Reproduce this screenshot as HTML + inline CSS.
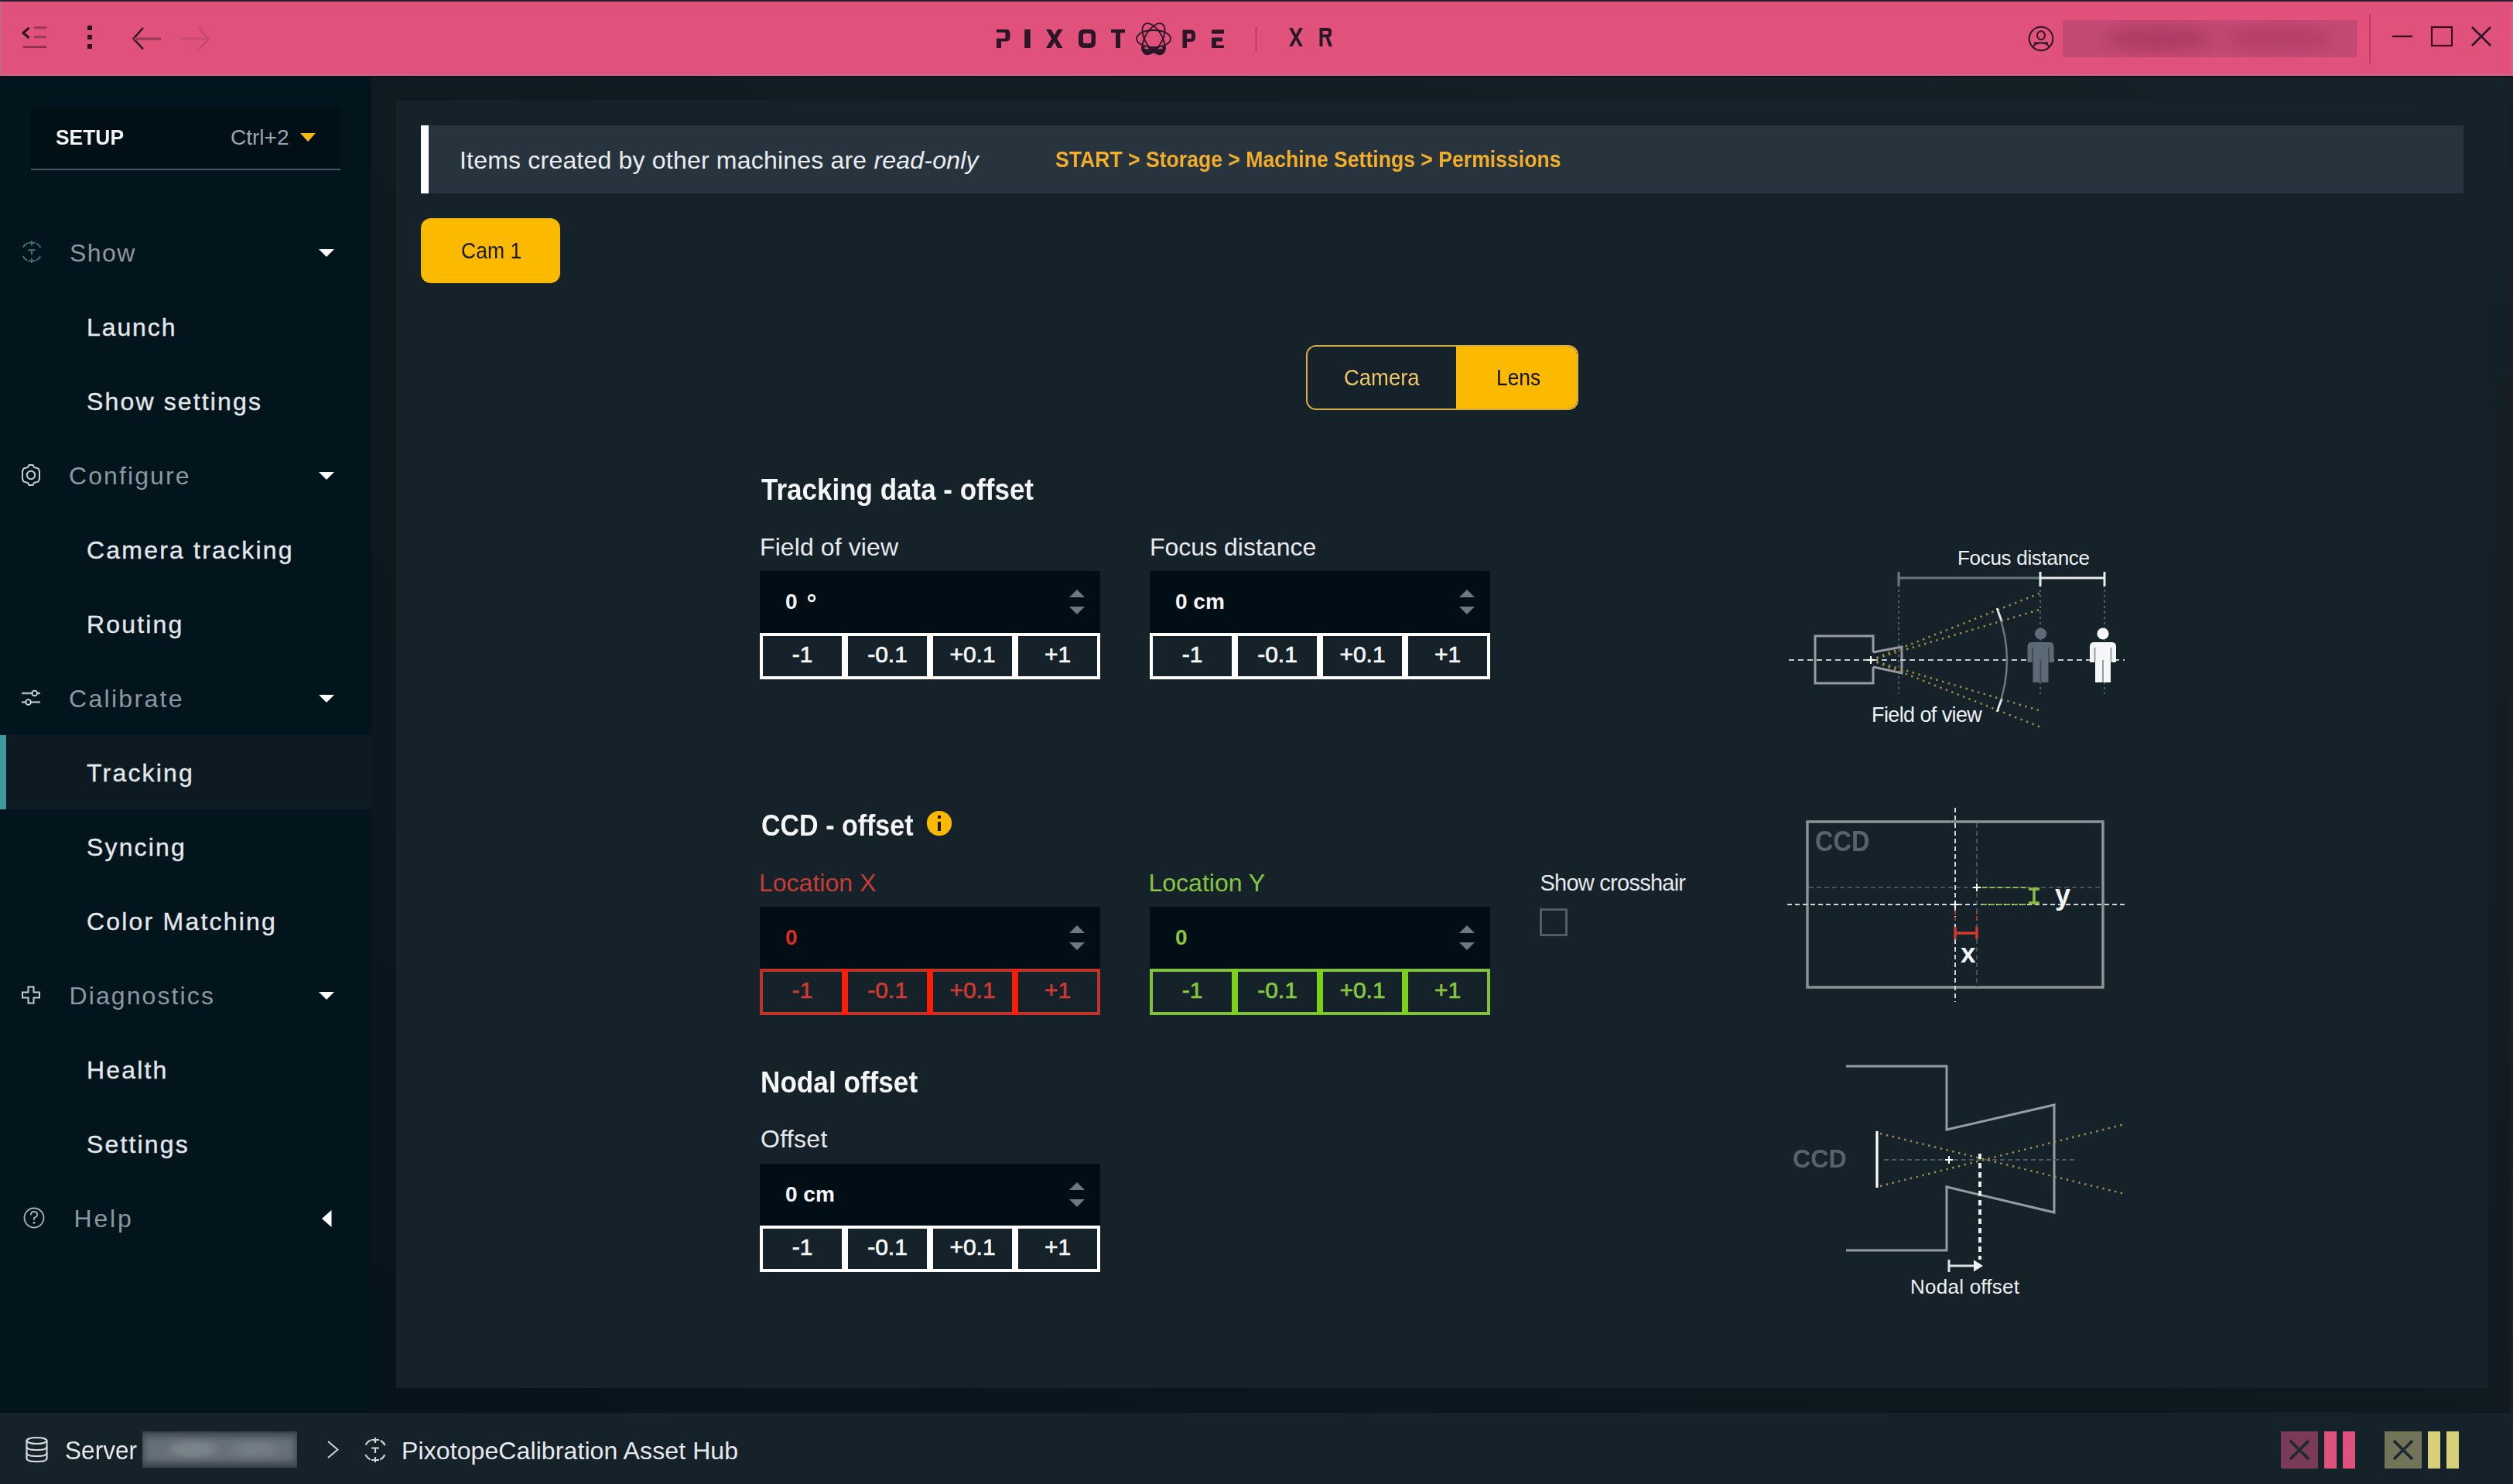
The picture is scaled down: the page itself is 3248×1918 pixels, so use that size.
<!DOCTYPE html>
<html><head><meta charset="utf-8">
<style>
html,body{margin:0;padding:0;}
body{width:3248px;height:1918px;overflow:hidden;position:relative;background:linear-gradient(to top right,#06121b 0%,#0f1920 50%,#162229 100%);font-family:"Liberation Sans",sans-serif;}
.a{position:absolute;}
.t{position:absolute;white-space:nowrap;font-family:"Liberation Sans",sans-serif;}
.tri{position:absolute;width:0;height:0;border-left:10px solid transparent;border-right:10px solid transparent;border-top:10px solid #fff;}
svg{position:absolute;left:0;top:0;}
</style></head><body>

<div class="a" style="left:0px;top:0px;width:3248px;height:98px;background:#e0527c;"></div>
<div class="a" style="left:0px;top:0px;width:3248px;height:2px;background:#2a1e33;"></div>
<div class="a" style="left:0px;top:96px;width:3248px;height:2px;background:#cc6a90;"></div>
<div class="a" style="left:0px;top:98px;width:3248px;height:2px;background:#1c0c18;"></div>
<div class="a" style="left:0px;top:2px;width:2px;height:94px;background:#c06a8e;"></div>
<div class="a" style="left:3246px;top:2px;width:2px;height:94px;background:#c06a8e;"></div>
<div class="a" style="left:0px;top:100px;width:480px;height:1726px;background:#02141c;"></div>
<div class="a" style="left:512px;top:130px;width:2704px;height:1664px;background:#162229;"></div>
<div class="a" style="left:0px;top:1826px;width:3248px;height:92px;background:#162229;"></div>
<div class="a" style="left:3243px;top:100px;width:5px;height:1726px;background:#181d27;"></div>
<div class="a" style="left:40px;top:138px;width:400px;height:81px;background:#010f17;"></div>
<div class="a" style="left:40px;top:218px;width:400px;height:2px;background:#4a5660;"></div>
<div class="t" style="left:72px;top:163.94px;font-size:28px;line-height:28px;color:#f2f4f6;font-weight:bold;letter-spacing:0px;transform:scaleX(0.943);transform-origin:0 0;">SETUP</div>
<div class="t" style="left:298px;top:163.94px;font-size:28px;line-height:28px;color:#9aa5ae;font-weight:normal;letter-spacing:0px;">Ctrl+2</div>
<div class="tri" style="left:388px;top:172px;border-top-color:#f5b90a;border-top-width:11px;"></div>
<div class="a" style="left:0px;top:950px;width:480px;height:96px;background:#0d1a22;"></div>
<div class="a" style="left:0px;top:950px;width:8px;height:96px;background:#3f9aa0;"></div>
<div class="t" style="left:90px;top:310.96px;font-size:32px;line-height:32px;color:#8c98a1;font-weight:normal;letter-spacing:1.4px;">Show</div>
<div class="t" style="left:89px;top:598.96px;font-size:32px;line-height:32px;color:#8c98a1;font-weight:normal;letter-spacing:2.1px;">Configure</div>
<div class="t" style="left:89px;top:886.96px;font-size:32px;line-height:32px;color:#8c98a1;font-weight:normal;letter-spacing:2.3px;">Calibrate</div>
<div class="t" style="left:89.5px;top:1270.96px;font-size:32px;line-height:32px;color:#8c98a1;font-weight:normal;letter-spacing:2.1px;">Diagnostics</div>
<div class="t" style="left:95.5px;top:1558.96px;font-size:32px;line-height:32px;color:#8c98a1;font-weight:normal;letter-spacing:2.8px;">Help</div>
<div class="t" style="left:112px;top:406.96px;font-size:32px;line-height:32px;color:#e3e8ec;font-weight:normal;letter-spacing:1.9px;-webkit-text-stroke:0.35px #e3e8ec;">Launch</div>
<div class="t" style="left:112px;top:502.96px;font-size:32px;line-height:32px;color:#e3e8ec;font-weight:normal;letter-spacing:2.15px;-webkit-text-stroke:0.35px #e3e8ec;">Show settings</div>
<div class="t" style="left:112px;top:694.96px;font-size:32px;line-height:32px;color:#e3e8ec;font-weight:normal;letter-spacing:2.2px;-webkit-text-stroke:0.35px #e3e8ec;">Camera tracking</div>
<div class="t" style="left:112px;top:790.96px;font-size:32px;line-height:32px;color:#e3e8ec;font-weight:normal;letter-spacing:2.15px;-webkit-text-stroke:0.35px #e3e8ec;">Routing</div>
<div class="t" style="left:112px;top:982.96px;font-size:32px;line-height:32px;color:#e3e8ec;font-weight:normal;letter-spacing:2.2px;-webkit-text-stroke:0.35px #e3e8ec;">Tracking</div>
<div class="t" style="left:112px;top:1078.96px;font-size:32px;line-height:32px;color:#e3e8ec;font-weight:normal;letter-spacing:2.15px;-webkit-text-stroke:0.35px #e3e8ec;">Syncing</div>
<div class="t" style="left:112px;top:1174.96px;font-size:32px;line-height:32px;color:#e3e8ec;font-weight:normal;letter-spacing:2.2px;-webkit-text-stroke:0.35px #e3e8ec;">Color Matching</div>
<div class="t" style="left:112px;top:1366.96px;font-size:32px;line-height:32px;color:#e3e8ec;font-weight:normal;letter-spacing:2.15px;-webkit-text-stroke:0.35px #e3e8ec;">Health</div>
<div class="t" style="left:112px;top:1462.96px;font-size:32px;line-height:32px;color:#e3e8ec;font-weight:normal;letter-spacing:2.15px;-webkit-text-stroke:0.35px #e3e8ec;">Settings</div>
<div class="tri" style="left:412px;top:322px;"></div>
<div class="tri" style="left:412px;top:610px;"></div>
<div class="tri" style="left:412px;top:898px;"></div>
<div class="tri" style="left:412px;top:1282px;"></div>
<div class="a" style="left:544px;top:162px;width:2640px;height:88px;background:#27343e;"></div>
<div class="a" style="left:544px;top:162px;width:10px;height:88px;background:#fbfdff;"></div>
<div class="t" style="left:594px;top:190.96px;font-size:32px;line-height:32px;color:#e9edf0;font-weight:normal;letter-spacing:0.2px;">Items created by other machines are <i>read-only</i></div>
<div class="t" style="left:1364px;top:191.50px;font-size:29px;line-height:29px;color:#f2ae2a;font-weight:bold;letter-spacing:0px;transform:scaleX(0.917);transform-origin:0 0;">START &gt; Storage &gt; Machine Settings &gt; Permissions</div>
<div class="a" style="left:544px;top:282px;width:180px;height:84px;background:#fbb900;border-radius:13px;"></div>
<div class="t" style="left:596px;top:308.65px;font-size:30px;line-height:30px;color:#1a1a1a;font-weight:normal;letter-spacing:0px;transform:scaleX(0.885);transform-origin:0 0;">Cam 1</div>
<div class="a" style="left:1688px;top:446px;width:348px;height:80px;border:2px solid #d9ad4a;border-radius:13px;overflow:hidden;"><div class="a" style="left:192px;top:0;width:156px;height:80px;background:#fbb900;"></div></div>
<div class="t" style="left:1737px;top:473.50px;font-size:29px;line-height:29px;color:#f0c66a;font-weight:normal;letter-spacing:0px;transform:scaleX(0.946);transform-origin:0 0;">Camera</div>
<div class="t" style="left:1934px;top:473.50px;font-size:29px;line-height:29px;color:#111;font-weight:normal;letter-spacing:0px;transform:scaleX(0.91);transform-origin:0 0;">Lens</div>
<div class="t" style="left:984px;top:613.89px;font-size:38px;line-height:38px;color:#f4f6f8;font-weight:bold;letter-spacing:0px;transform:scaleX(0.921);transform-origin:0 0;">Tracking data - offset</div>
<div class="t" style="left:982px;top:690.96px;font-size:32px;line-height:32px;color:#e6eaee;font-weight:normal;letter-spacing:0.1px;">Field of view</div>
<div class="t" style="left:1486px;top:690.96px;font-size:32px;line-height:32px;color:#e6eaee;font-weight:normal;letter-spacing:0px;">Focus distance</div>
<div class="a" style="left:982px;top:738px;width:440px;height:80px;background:#020e16;"></div>
<div class="t" style="left:1015px;top:764.34px;font-size:28px;line-height:28px;color:#f4f6f8;font-weight:bold;letter-spacing:0px;">0</div>
<div class="a" style="left:1382px;top:762px;width:0;height:0;border-left:10px solid transparent;border-right:10px solid transparent;border-bottom:10px solid #6e7880;"></div>
<div class="a" style="left:1382px;top:784px;width:0;height:0;border-left:10px solid transparent;border-right:10px solid transparent;border-top:10px solid #6e7880;"></div>
<div class="a" style="left:982px;top:818px;width:440px;height:60px;background:#ffffff;"></div>
<div class="a" style="left:986px;top:822px;width:102px;height:52px;background:#162229;"></div>
<div class="a" style="left:1096px;top:822px;width:102px;height:52px;background:#162229;"></div>
<div class="a" style="left:1206px;top:822px;width:102px;height:52px;background:#162229;"></div>
<div class="a" style="left:1316px;top:822px;width:102px;height:52px;background:#162229;"></div>
<div class="a" style="left:1088px;top:818px;width:8px;height:60px;background:#ffffff;"></div>
<div class="a" style="left:1198px;top:818px;width:8px;height:60px;background:#ffffff;"></div>
<div class="a" style="left:1308px;top:818px;width:8px;height:60px;background:#ffffff;"></div>
<div class="t" style="left:987px;top:830.85px;width:100px;text-align:center;font-size:30px;line-height:30px;font-weight:normal;-webkit-text-stroke:0.7px #f4f6f8;color:#f4f6f8;">-1</div>
<div class="t" style="left:1097px;top:830.85px;width:100px;text-align:center;font-size:30px;line-height:30px;font-weight:normal;-webkit-text-stroke:0.7px #f4f6f8;color:#f4f6f8;">-0.1</div>
<div class="t" style="left:1207px;top:830.85px;width:100px;text-align:center;font-size:30px;line-height:30px;font-weight:normal;-webkit-text-stroke:0.7px #f4f6f8;color:#f4f6f8;">+0.1</div>
<div class="t" style="left:1317px;top:830.85px;width:100px;text-align:center;font-size:30px;line-height:30px;font-weight:normal;-webkit-text-stroke:0.7px #f4f6f8;color:#f4f6f8;">+1</div>
<svg width="3248" height="1918" style="position:absolute;left:0;top:0"><circle cx="1049.1" cy="773" r="3.9" fill="none" stroke="#f4f6f8" stroke-width="2.6"/></svg>
<div class="a" style="left:1486px;top:738px;width:440px;height:80px;background:#020e16;"></div>
<div class="t" style="left:1519px;top:764.34px;font-size:28px;line-height:28px;color:#f4f6f8;font-weight:bold;letter-spacing:0px;">0 cm</div>
<div class="a" style="left:1886px;top:762px;width:0;height:0;border-left:10px solid transparent;border-right:10px solid transparent;border-bottom:10px solid #6e7880;"></div>
<div class="a" style="left:1886px;top:784px;width:0;height:0;border-left:10px solid transparent;border-right:10px solid transparent;border-top:10px solid #6e7880;"></div>
<div class="a" style="left:1486px;top:818px;width:440px;height:60px;background:#ffffff;"></div>
<div class="a" style="left:1490px;top:822px;width:102px;height:52px;background:#162229;"></div>
<div class="a" style="left:1600px;top:822px;width:102px;height:52px;background:#162229;"></div>
<div class="a" style="left:1710px;top:822px;width:102px;height:52px;background:#162229;"></div>
<div class="a" style="left:1820px;top:822px;width:102px;height:52px;background:#162229;"></div>
<div class="a" style="left:1592px;top:818px;width:8px;height:60px;background:#ffffff;"></div>
<div class="a" style="left:1702px;top:818px;width:8px;height:60px;background:#ffffff;"></div>
<div class="a" style="left:1812px;top:818px;width:8px;height:60px;background:#ffffff;"></div>
<div class="t" style="left:1491px;top:830.85px;width:100px;text-align:center;font-size:30px;line-height:30px;font-weight:normal;-webkit-text-stroke:0.7px #f4f6f8;color:#f4f6f8;">-1</div>
<div class="t" style="left:1601px;top:830.85px;width:100px;text-align:center;font-size:30px;line-height:30px;font-weight:normal;-webkit-text-stroke:0.7px #f4f6f8;color:#f4f6f8;">-0.1</div>
<div class="t" style="left:1711px;top:830.85px;width:100px;text-align:center;font-size:30px;line-height:30px;font-weight:normal;-webkit-text-stroke:0.7px #f4f6f8;color:#f4f6f8;">+0.1</div>
<div class="t" style="left:1821px;top:830.85px;width:100px;text-align:center;font-size:30px;line-height:30px;font-weight:normal;-webkit-text-stroke:0.7px #f4f6f8;color:#f4f6f8;">+1</div>
<div class="t" style="left:984px;top:1047.89px;font-size:38px;line-height:38px;color:#f4f6f8;font-weight:bold;letter-spacing:0px;transform:scaleX(0.895);transform-origin:0 0;">CCD - offset</div>
<svg width="3248" height="1918" style="position:absolute;left:0;top:0"><circle cx="1214" cy="1064" r="16.1" fill="#fbb900"/><rect x="1212" y="1054" width="4" height="4" fill="#1e1806"/><rect x="1212" y="1062" width="4" height="12" fill="#1e1806"/></svg>
<div class="t" style="left:981px;top:1124.96px;font-size:32px;line-height:32px;color:#c83c36;font-weight:normal;letter-spacing:0px;">Location X</div>
<div class="t" style="left:1484.5px;top:1124.96px;font-size:32px;line-height:32px;color:#86c640;font-weight:normal;letter-spacing:0px;">Location Y</div>
<div class="t" style="left:1990.5px;top:1127.49px;font-size:29px;line-height:29px;color:#e6eaee;font-weight:normal;letter-spacing:-0.75px;">Show crosshair</div>
<div class="a" style="left:1990px;top:1174px;width:36px;height:36px;background:transparent;box-sizing:border-box;border:3px solid #505c66;"></div>
<div class="a" style="left:982px;top:1172px;width:440px;height:80px;background:#020e16;"></div>
<div class="t" style="left:1015px;top:1198.34px;font-size:28px;line-height:28px;color:#dc2c22;font-weight:bold;letter-spacing:0px;">0</div>
<div class="a" style="left:1382px;top:1196px;width:0;height:0;border-left:10px solid transparent;border-right:10px solid transparent;border-bottom:10px solid #6e7880;"></div>
<div class="a" style="left:1382px;top:1218px;width:0;height:0;border-left:10px solid transparent;border-right:10px solid transparent;border-top:10px solid #6e7880;"></div>
<div class="a" style="left:982px;top:1252px;width:440px;height:60px;background:#bf3329;"></div>
<div class="a" style="left:986px;top:1256px;width:102px;height:52px;background:#162229;"></div>
<div class="a" style="left:1096px;top:1256px;width:102px;height:52px;background:#162229;"></div>
<div class="a" style="left:1206px;top:1256px;width:102px;height:52px;background:#162229;"></div>
<div class="a" style="left:1316px;top:1256px;width:102px;height:52px;background:#162229;"></div>
<div class="a" style="left:1088px;top:1252px;width:8px;height:60px;background:#f81e0a;"></div>
<div class="a" style="left:1198px;top:1252px;width:8px;height:60px;background:#f81e0a;"></div>
<div class="a" style="left:1308px;top:1252px;width:8px;height:60px;background:#f81e0a;"></div>
<div class="t" style="left:987px;top:1264.85px;width:100px;text-align:center;font-size:30px;line-height:30px;font-weight:normal;-webkit-text-stroke:0.7px #cc3a32;color:#cc3a32;">-1</div>
<div class="t" style="left:1097px;top:1264.85px;width:100px;text-align:center;font-size:30px;line-height:30px;font-weight:normal;-webkit-text-stroke:0.7px #cc3a32;color:#cc3a32;">-0.1</div>
<div class="t" style="left:1207px;top:1264.85px;width:100px;text-align:center;font-size:30px;line-height:30px;font-weight:normal;-webkit-text-stroke:0.7px #cc3a32;color:#cc3a32;">+0.1</div>
<div class="t" style="left:1317px;top:1264.85px;width:100px;text-align:center;font-size:30px;line-height:30px;font-weight:normal;-webkit-text-stroke:0.7px #cc3a32;color:#cc3a32;">+1</div>
<div class="a" style="left:1486px;top:1172px;width:440px;height:80px;background:#020e16;"></div>
<div class="t" style="left:1519px;top:1198.34px;font-size:28px;line-height:28px;color:#86c640;font-weight:bold;letter-spacing:0px;">0</div>
<div class="a" style="left:1886px;top:1196px;width:0;height:0;border-left:10px solid transparent;border-right:10px solid transparent;border-bottom:10px solid #6e7880;"></div>
<div class="a" style="left:1886px;top:1218px;width:0;height:0;border-left:10px solid transparent;border-right:10px solid transparent;border-top:10px solid #6e7880;"></div>
<div class="a" style="left:1486px;top:1252px;width:440px;height:60px;background:#84c040;"></div>
<div class="a" style="left:1490px;top:1256px;width:102px;height:52px;background:#162229;"></div>
<div class="a" style="left:1600px;top:1256px;width:102px;height:52px;background:#162229;"></div>
<div class="a" style="left:1710px;top:1256px;width:102px;height:52px;background:#162229;"></div>
<div class="a" style="left:1820px;top:1256px;width:102px;height:52px;background:#162229;"></div>
<div class="a" style="left:1592px;top:1252px;width:8px;height:60px;background:#7ccf1a;"></div>
<div class="a" style="left:1702px;top:1252px;width:8px;height:60px;background:#7ccf1a;"></div>
<div class="a" style="left:1812px;top:1252px;width:8px;height:60px;background:#7ccf1a;"></div>
<div class="t" style="left:1491px;top:1264.85px;width:100px;text-align:center;font-size:30px;line-height:30px;font-weight:normal;-webkit-text-stroke:0.7px #86c640;color:#86c640;">-1</div>
<div class="t" style="left:1601px;top:1264.85px;width:100px;text-align:center;font-size:30px;line-height:30px;font-weight:normal;-webkit-text-stroke:0.7px #86c640;color:#86c640;">-0.1</div>
<div class="t" style="left:1711px;top:1264.85px;width:100px;text-align:center;font-size:30px;line-height:30px;font-weight:normal;-webkit-text-stroke:0.7px #86c640;color:#86c640;">+0.1</div>
<div class="t" style="left:1821px;top:1264.85px;width:100px;text-align:center;font-size:30px;line-height:30px;font-weight:normal;-webkit-text-stroke:0.7px #86c640;color:#86c640;">+1</div>
<div class="t" style="left:983px;top:1379.89px;font-size:38px;line-height:38px;color:#f4f6f8;font-weight:bold;letter-spacing:0px;transform:scaleX(0.925);transform-origin:0 0;">Nodal offset</div>
<div class="t" style="left:983px;top:1455.96px;font-size:32px;line-height:32px;color:#e6eaee;font-weight:normal;letter-spacing:0.3px;">Offset</div>
<div class="a" style="left:982px;top:1504px;width:440px;height:80px;background:#020e16;"></div>
<div class="t" style="left:1015px;top:1530.34px;font-size:28px;line-height:28px;color:#f4f6f8;font-weight:bold;letter-spacing:0px;">0 cm</div>
<div class="a" style="left:1382px;top:1528px;width:0;height:0;border-left:10px solid transparent;border-right:10px solid transparent;border-bottom:10px solid #6e7880;"></div>
<div class="a" style="left:1382px;top:1550px;width:0;height:0;border-left:10px solid transparent;border-right:10px solid transparent;border-top:10px solid #6e7880;"></div>
<div class="a" style="left:982px;top:1584px;width:440px;height:60px;background:#ffffff;"></div>
<div class="a" style="left:986px;top:1588px;width:102px;height:52px;background:#162229;"></div>
<div class="a" style="left:1096px;top:1588px;width:102px;height:52px;background:#162229;"></div>
<div class="a" style="left:1206px;top:1588px;width:102px;height:52px;background:#162229;"></div>
<div class="a" style="left:1316px;top:1588px;width:102px;height:52px;background:#162229;"></div>
<div class="a" style="left:1088px;top:1584px;width:8px;height:60px;background:#ffffff;"></div>
<div class="a" style="left:1198px;top:1584px;width:8px;height:60px;background:#ffffff;"></div>
<div class="a" style="left:1308px;top:1584px;width:8px;height:60px;background:#ffffff;"></div>
<div class="t" style="left:987px;top:1596.85px;width:100px;text-align:center;font-size:30px;line-height:30px;font-weight:normal;-webkit-text-stroke:0.7px #f4f6f8;color:#f4f6f8;">-1</div>
<div class="t" style="left:1097px;top:1596.85px;width:100px;text-align:center;font-size:30px;line-height:30px;font-weight:normal;-webkit-text-stroke:0.7px #f4f6f8;color:#f4f6f8;">-0.1</div>
<div class="t" style="left:1207px;top:1596.85px;width:100px;text-align:center;font-size:30px;line-height:30px;font-weight:normal;-webkit-text-stroke:0.7px #f4f6f8;color:#f4f6f8;">+0.1</div>
<div class="t" style="left:1317px;top:1596.85px;width:100px;text-align:center;font-size:30px;line-height:30px;font-weight:normal;-webkit-text-stroke:0.7px #f4f6f8;color:#f4f6f8;">+1</div>
<svg width="3248" height="1918" viewBox="0 0 3248 1918">
<path d="M37.5,36 L30,42.5 L37.5,49" fill="none" stroke="#2a1626" stroke-width="3"/>
<rect x="44" y="34" width="16" height="3.5" fill="#9e3c5e"/>
<rect x="44" y="46" width="16" height="3.5" fill="#9e3c5e"/>
<rect x="30" y="59.5" width="30" height="2.5" fill="#8a2f50"/>
<rect x="113" y="33" width="6" height="6" fill="#2a1626"/>
<rect x="113" y="45" width="6" height="6" fill="#2a1626"/>
<rect x="113" y="57" width="6" height="6" fill="#2a1626"/>
<path d="M185,36 L172.5,50 L185,63.5" fill="none" stroke="#2a1626" stroke-width="2.5"/>
<rect x="173" y="48.5" width="35" height="3.5" fill="#9a3a5c"/>
<path d="M257,36 L269.5,50 L257,63.5" fill="none" stroke="#c24572" stroke-width="2.5"/>
<rect x="234" y="48.5" width="35" height="3" fill="#c8487a"/>
<g fill="#2a1626">
<path d="M1288,38 H1300 Q1305.5,38 1305.5,43.5 V48 Q1305.5,53.6 1300,53.6 H1294 V62 H1288 V49.7 H1299 Q1299.5,49.7 1299.5,48.5 V43.5 Q1299.5,42 1298.5,42 H1288 Z"/>
<rect x="1324.2" y="38" width="7.5" height="24"/>
<path d="M1352,38 H1358.5 L1362.75,45.5 L1367,38 H1373.5 L1366.2,50 L1373.5,62 H1367 L1362.75,54.5 L1358.5,62 H1352 L1359.3,50 Z"/>
<path fill-rule="evenodd" d="M1401,38 H1409 Q1416,38 1416,45 V55 Q1416,62 1409,62 H1401 Q1394,62 1394,55 V45 Q1394,38 1401,38 Z M1402,43.3 Q1400,43.3 1400,45.3 V54 Q1400,56 1402,56 H1408.5 Q1410.5,56 1410.5,54 V45.3 Q1410.5,43.3 1408.5,43.3 Z"/>
<rect x="1436" y="38" width="18" height="4.5"/><rect x="1442" y="38" width="6" height="24"/>
<path fill-rule="evenodd" d="M1528.5,38.4 H1539 Q1545,38.4 1545,44.4 V48 Q1545,54 1539,54 H1534 V62 H1528.5 Z M1534,43.4 V50 H1538.5 Q1540,50 1540,48.5 V44.9 Q1540,43.4 1538.5,43.4 Z"/>
<rect x="1566" y="38.4" width="16" height="5.2"/><path d="M1566,48.4 H1580 V53.4 H1572 V58.4 H1582 V62 H1566 Z"/>
</g>
<g fill="none" stroke="#2a1626" stroke-width="1.8">
<ellipse cx="1491" cy="50" rx="22" ry="11" transform="rotate(0 1491 50)"/>
<ellipse cx="1491" cy="50" rx="22" ry="11" transform="rotate(60 1491 50)"/>
<ellipse cx="1491" cy="50" rx="22" ry="11" transform="rotate(120 1491 50)"/>
</g>
<defs><clipPath id="atb"><rect x="1460" y="60" width="60" height="12"/></clipPath></defs>
<g fill="none" stroke="#2a1626" stroke-width="4.5" clip-path="url(#atb)">
<ellipse cx="1491" cy="50" rx="21" ry="10.2" transform="rotate(60 1491 50)"/>
<ellipse cx="1491" cy="50" rx="21" ry="10.2" transform="rotate(120 1491 50)"/>
<path d="M1480,65.5 H1502" />
</g>
<rect x="1622.4" y="34" width="2" height="32" fill="#b8406a"/>
<path d="M1666,36 H1670.5 L1675,44.5 L1679.5,36 H1684 L1677.3,48 L1684,60 H1679.5 L1675,51.5 L1670.5,60 H1666 L1672.7,48 Z" fill="#2a1626"/>
<path fill-rule="evenodd" d="M1705.5,36 H1716 Q1721,36 1721,41 V43.5 Q1721,47.5 1717.5,48 L1722,60 H1717.5 L1713.5,48.3 H1709.5 V60 H1705.5 Z M1709.5,40 V44.5 H1715.5 Q1717,44.5 1717,43 V41.5 Q1717,40 1715.5,40 Z" fill="#2a1626"/>
<g fill="none" stroke="#2a1626" stroke-width="2">
<circle cx="2638" cy="50" r="15.3"/>
<ellipse cx="2638" cy="45.8" rx="5" ry="5.5"/>
<path d="M2629,55.5 H2647 M2627.5,60 Q2631,55.5 2638,55.5 Q2645,55.5 2648.5,60"/>
</g>
<defs><filter id="bl" x="-20%" y="-50%" width="140%" height="200%"><feGaussianBlur stdDeviation="9"/></filter>
<filter id="bl2" x="-20%" y="-50%" width="140%" height="200%"><feGaussianBlur stdDeviation="6"/></filter></defs>
<rect x="2666" y="26" width="380" height="48" fill="#cc4c78"/>
<defs><clipPath id="cpu"><rect x="2666" y="26" width="380" height="48"/></clipPath></defs>
<g clip-path="url(#cpu)"><g filter="url(#bl)"><rect x="2650" y="20" width="410" height="60" fill="#c24872"/><ellipse cx="2790" cy="50" rx="70" ry="16" fill="#ad3a64"/><ellipse cx="2945" cy="50" rx="70" ry="14" fill="#b53e68"/></g></g>
<rect x="3062" y="18" width="2" height="64" fill="#b8406a"/>
<rect x="3092" y="45.8" width="26" height="2.4" fill="#3c0a1e"/>
<rect x="3143" y="35" width="26" height="24" fill="none" stroke="#3c0a1e" stroke-width="2.2"/>
<path d="M3195,35 L3219,59 M3219,35 L3195,59" stroke="#2a1626" stroke-width="2.6"/>
</svg>
<svg width="3248" height="1918" viewBox="0 0 3248 1918">
<path d="M2454,747 H2637" stroke="#6c7880" stroke-width="3"/>
<path d="M2637,747 H2720" stroke="#e8ecef" stroke-width="3"/>
<path d="M2454,739 V758" stroke="#6c7880" stroke-width="3"/>
<path d="M2637,739 V758 M2720,739 V758" stroke="#e8ecef" stroke-width="3"/>
<path d="M2454,762 V897 M2637,762 V897 M2720,762 V897" stroke="#505c66" stroke-width="2" stroke-dasharray="3 4"/>
<path d="M2421,843 V822 H2346 V883 H2421 V862" fill="none" stroke="#979ca4" stroke-width="3"/>
<path d="M2421,843 L2458,836 V870 L2421,862" fill="none" stroke="#979ca4" stroke-width="3"/>
<path d="M2312,853 H2746" stroke="#c4cad0" stroke-width="2" stroke-dasharray="7 5"/>
<path d="M2418,853 L2636,767 M2418,853 L2636,788 M2418,853 L2638,919 M2418,853 L2638,940" stroke="#a08a48" stroke-width="2.5" stroke-dasharray="2.5 5.5"/>
<path d="M2418,848 V858 M2413,853 H2423" stroke="#fff" stroke-width="2"/>
<path d="M2582,790 Q2606,853 2582,917" fill="none" stroke="#6c7880" stroke-width="2.5"/>
<path d="M2581,786 L2587,802 M2581,920 L2587,904" stroke="#e8ecef" stroke-width="2.5"/>
<g fill="#5c6a76"><circle cx="2637.5" cy="819" r="7.6"/><path d="M2625.5,830 H2649.5 Q2654.5,830 2654.5,836 V856 H2647.5 V882 H2627.5 V856 H2620.5 V836 Q2620.5,830 2625.5,830 Z"/></g><path d="M2627.0,837 V856 M2648.0,837 V856 M2637.5,853 V882" stroke="#162229" stroke-width="1.8" opacity="0.45"/>
<g fill="#f4f6f8"><circle cx="2718" cy="819" r="7.6"/><path d="M2706,830 H2730 Q2735,830 2735,836 V856 H2728 V882 H2708 V856 H2701 V836 Q2701,830 2706,830 Z"/></g><path d="M2707.5,837 V856 M2728.5,837 V856 M2718,853 V882" stroke="#162229" stroke-width="1.8" opacity="0.45"/>
<rect x="2336" y="1062" width="382" height="214" fill="none" stroke="#8c9196" stroke-width="3.5"/>
<path d="M2527,1044 V1295" stroke="#d0d5da" stroke-width="2" stroke-dasharray="6 4"/>
<path d="M2310,1169 H2747" stroke="#d0d5da" stroke-width="2" stroke-dasharray="6 4"/>
<path d="M2555,1064 V1276" stroke="#56626c" stroke-width="1.5" stroke-dasharray="6 4"/>
<path d="M2338,1147 H2718" stroke="#56626c" stroke-width="1.5" stroke-dasharray="6 4"/>
<path d="M2562,1147 H2622 M2562,1169 H2622" stroke="#86b848" stroke-width="2" stroke-dasharray="6 4"/>
<path d="M2629,1149 V1167 M2622,1149 H2636 M2622,1167 H2636" stroke="#86c040" stroke-width="3.5"/>
<path d="M2555,1142 V1152 M2550,1147 H2560 M2527,1164 V1174 M2522,1169 H2532" stroke="#fff" stroke-width="2"/>
<path d="M2527,1177 V1191 M2555,1177 V1191" stroke="#a03a34" stroke-width="2" stroke-dasharray="5 3"/>
<path d="M2527,1206 H2555 M2527,1198 V1214 M2555,1198 V1214" stroke="#d03a2c" stroke-width="3.5"/>
<path d="M2386,1378 H2516 V1460 L2655,1428 V1567 L2516,1534 V1616 H2386" fill="none" stroke="#979ca4" stroke-width="3"/>
<path d="M2426,1462 V1535" stroke="#fff" stroke-width="3.2"/>
<path d="M2435,1499 H2682" stroke="#4c5862" stroke-width="2" stroke-dasharray="6 4"/>
<path d="M2430,1465 L2746,1543 M2430,1533 L2746,1453" stroke="#a08a48" stroke-width="2.5" stroke-dasharray="2.5 5.5"/>
<path d="M2519,1494 V1504 M2514,1499 H2524" stroke="#fff" stroke-width="2"/>
<path d="M2559,1491 V1628" stroke="#e8ecef" stroke-width="4" stroke-dasharray="7 5"/>
<path d="M2519,1628 V1644 M2519,1636 H2553" stroke="#dfe3e6" stroke-width="3"/>
<path d="M2551,1628.5 L2563,1636 L2551,1643.5 Z" fill="#eef1f3"/>
</svg>
<svg width="3248" height="1918" viewBox="0 0 3248 1918">
<g fill="none" stroke="#41777a" stroke-width="1.8"><circle cx="41" cy="325.5" r="12.60" stroke-dasharray="7.92 11.88" stroke-dashoffset="-5.94"/><path d="M36.5,313.8 H45.5 M41,311.1 V317.4 M36.5,337.2 H45.5 M41,339.9 V333.6 M36.5,323.25 H45.5 M41,323.25 V329.1"/></g>
<g fill="none" stroke="#c4ccd2" stroke-width="2"><path d="M37.5,601 H42.5 L44,604 L49.5,605.5 L51,609 V619 L49.5,622.5 L44,624 L42.5,627 H37.5 L36,624 L30.5,622.5 L29,619 V609 L30.5,605.5 L36,604 Z"/><circle cx="40" cy="614" r="5.2"/></g>
<g stroke="#a8b2ba" stroke-width="2.5"><path d="M28,896 H52 M28,907.5 H52"/></g><g fill="#02141c" stroke="#d8dde2" stroke-width="1.8"><circle cx="44.7" cy="896" r="3.3"/><circle cx="36.6" cy="907.5" r="3.3"/></g>
<path d="M36.5,1275.5 H43.5 V1282.5 H51 V1289.5 H43.5 V1296.5 H36.5 V1289.5 H29 V1282.5 H36.5 Z" fill="none" stroke="#c4ccd2" stroke-width="2"/>
<g fill="none" stroke="#a8b2ba" stroke-width="1.8"><circle cx="44" cy="1574" r="12.5"/><path d="M39.8,1570.5 Q39.8,1566 44,1566 Q48.2,1566 48.2,1570 Q48.2,1572.5 44,1574 V1577"/></g><rect x="42.7" y="1579" width="2.6" height="2.6" fill="#a8b2ba"/>
<path d="M428.5,1564 V1586 L416,1575 Z" fill="#fff"/>
<g fill="none" stroke="#d4d9dd" stroke-width="2.2"><ellipse cx="47.5" cy="1862" rx="13" ry="4"/><path d="M34.5,1862 V1885 Q34.5,1889 47.5,1889 Q60.5,1889 60.5,1885 V1862"/><path d="M34.5,1870 Q34.5,1874 47.5,1874 Q60.5,1874 60.5,1870 M34.5,1878 Q34.5,1882 47.5,1882 Q60.5,1882 60.5,1878"/></g>
<defs><clipPath id="cp1"><rect x="184" y="1850" width="200" height="47"/></clipPath><filter id="bs"><feGaussianBlur stdDeviation="5"/></filter></defs>
<rect x="184" y="1850" width="200" height="47" fill="#3a444b"/>
<g clip-path="url(#cp1)" filter="url(#bs)"><rect x="186" y="1856" width="196" height="34" fill="#66707a"/><ellipse cx="250" cy="1873" rx="30" ry="10" fill="#7a848b"/><ellipse cx="330" cy="1873" rx="30" ry="10" fill="#737d84"/></g>
<path d="M424,1863 L436.5,1873.5 L424,1884" fill="none" stroke="#d0d5da" stroke-width="2"/>
<g fill="none" stroke="#d0d5da" stroke-width="2.2"><circle cx="485" cy="1874" r="14.00" stroke-dasharray="8.80 13.19" stroke-dashoffset="-6.60"/><path d="M480.0,1861.0 H490.0 M485,1858.0 V1865.0 M480.0,1887.0 H490.0 M485,1890.0 V1883.0 M480.0,1871.5 H490.0 M485,1871.5 V1878.0"/></g>
<rect x="2948" y="1850" width="48" height="48" fill="#7a3a5a"/>
<path d="M2960,1862 L2984,1886 M2984,1862 L2960,1886" stroke="#1e2a33" stroke-width="3.8"/>
<rect x="3004" y="1850" width="16" height="48" fill="#e0527e"/><rect x="3028" y="1850" width="16" height="48" fill="#e0527e"/>
<rect x="3082" y="1850" width="48" height="48" fill="#72745a"/>
<path d="M3094,1862 L3118,1886 M3118,1862 L3094,1886" stroke="#1e2a33" stroke-width="3.8"/>
<rect x="3138" y="1850" width="16" height="48" fill="#d8d078"/><rect x="3162" y="1850" width="16" height="48" fill="#d8d078"/>
</svg>
<div class="t" style="left:2530px;top:708.03px;font-size:26px;line-height:26px;color:#eef1f3;font-weight:normal;letter-spacing:-0.3px;">Focus distance</div>
<div class="t" style="left:2419px;top:911.18px;font-size:27px;line-height:27px;color:#eef1f3;font-weight:normal;letter-spacing:-0.6px;">Field of view</div>
<div class="t" style="left:2346px;top:1068.73px;font-size:37px;line-height:37px;color:#56636e;font-weight:bold;letter-spacing:0px;transform:scaleX(0.88);transform-origin:0 0;">CCD</div>
<div class="t" style="left:2656px;top:1138.58px;font-size:36px;line-height:36px;color:#f4f6f8;font-weight:bold;letter-spacing:0px;">y</div>
<div class="t" style="left:2534px;top:1214.42px;font-size:35px;line-height:35px;color:#f4f6f8;font-weight:bold;letter-spacing:0px;">x</div>
<div class="t" style="left:2317px;top:1480.27px;font-size:34px;line-height:34px;color:#56636e;font-weight:bold;letter-spacing:0px;transform:scaleX(0.945);transform-origin:0 0;">CCD</div>
<div class="t" style="left:2469px;top:1650.03px;font-size:26px;line-height:26px;color:#eef1f3;font-weight:normal;letter-spacing:0.25px;">Nodal offset</div>
<div class="t" style="left:84px;top:1858.12px;font-size:33px;line-height:33px;color:#e6eaee;font-weight:normal;letter-spacing:0px;transform:scaleX(0.958);transform-origin:0 0;">Server</div>
<div class="t" style="left:519px;top:1858.96px;font-size:32px;line-height:32px;color:#e6eaee;font-weight:normal;letter-spacing:0.1px;">PixotopeCalibration Asset Hub</div>
</body></html>
